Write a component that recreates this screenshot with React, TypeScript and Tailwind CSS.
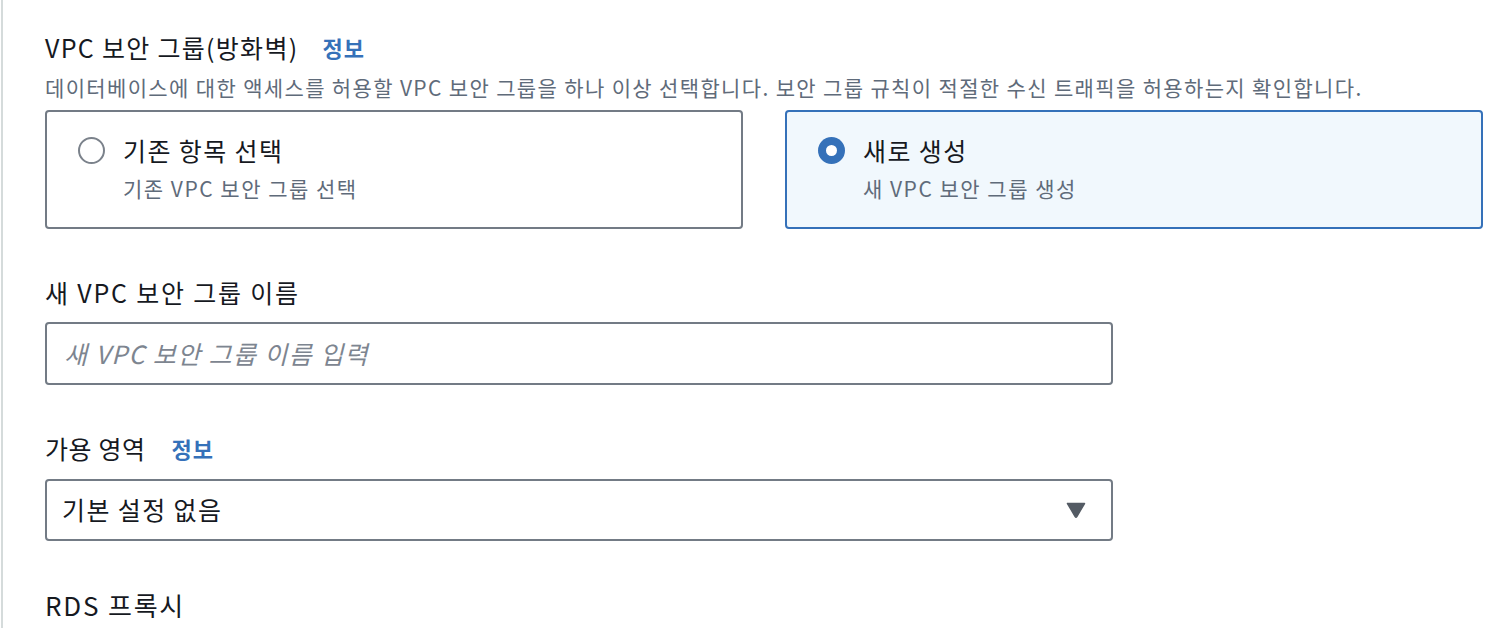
import React from "react";

const FONT = { fontFamily: '"Noto Sans CJK KR", "Noto Sans", sans-serif' };

function InfoLink({ gap }: { gap: string }) {
  return (
    <span className={`${gap} text-[22px] font-bold leading-[32px] tracking-[1px] text-[#3571b9]`}>정보</span>
  );
}

function RadioCard({
  title,
  subtitle,
  selected,
}: {
  title: string;
  subtitle: string;
  selected?: boolean;
}) {
  return (
    <div
      className={`flex h-[119px] flex-1 flex-col rounded-[4px] border-2 pl-[31px] pt-[22px] ${
        selected ? "border-[#3571b9] bg-[#f1f8fd]" : "border-[#737b85] bg-white"
      }`}
    >
      <div className="flex h-[32px] items-center">
        {selected ? (
          <span className="flex h-[27px] w-[27px] shrink-0 items-center justify-center rounded-full bg-[#3571b9]">
            <span className="h-[11px] w-[11px] rounded-full bg-white" />
          </span>
        ) : (
          <span className="h-[27px] w-[27px] shrink-0 rounded-full border-[2.5px] border-[#7b828b] bg-white" />
        )}
        <span className="ml-[18px] text-[25px] leading-[32px] tracking-[1.4px] text-[#16191f]">{title}</span>
      </div>
      <div className="mt-[8px] pl-[45px] text-[21px] leading-[28px] tracking-[1.5px] text-[#5f6b7a]">{subtitle}</div>
    </div>
  );
}

export default function App() {
  return (
    <div className="h-[628px] overflow-hidden bg-white pl-[1px]" style={FONT}>
      <div className="h-full border-l-2 border-[#d5dbdb] pl-[42px] pr-[29px] pt-[31px]">
        {/* Security group */}
        <div className="flex h-[32px] items-center">
          <span className="text-[25px] leading-[32px] tracking-[1.3px] text-[#16191f]">VPC 보안 그룹(방화벽)</span>
          <InfoLink gap="ml-[24px]" />
        </div>
        <p className="mt-[10px] whitespace-nowrap text-[21px] leading-[28px] tracking-[1.35px] text-[#5f6b7a]">
          데이터베이스에 대한 액세스를 허용할 VPC 보안 그룹을 하나 이상 선택합니다. 보안 그룹 규칙이 적절한 수신 트래픽을 허용하는지 확인합니다.
        </p>
        <div className="mt-[9px] flex gap-[42px]">
          <RadioCard title="기존 항목 선택" subtitle="기존 VPC 보안 그룹 선택" />
          <RadioCard title="새로 생성" subtitle="새 VPC 보안 그룹 생성" selected />
        </div>

        {/* New group name */}
        <div className="mt-[47px] text-[25px] leading-[32px] tracking-[1.8px] text-[#16191f]">새 VPC 보안 그룹 이름</div>
        <div className="mt-[14px] flex h-[63px] w-[1068px] items-center rounded-[4px] border-2 border-[#737b85] pl-[17px]">
          <span className="text-[25px] italic tracking-[1.4px] text-[#7d8590]">새 VPC 보안 그룹 이름 입력</span>
        </div>

        {/* Availability zone */}
        <div className="mt-[47px] flex h-[32px] items-center">
          <span className="text-[25px] leading-[32px] tracking-[0.6px] text-[#16191f]">가용 영역</span>
          <InfoLink gap="ml-[26px]" />
        </div>
        <div className="mt-[15px] flex h-[62px] w-[1068px] items-center justify-between rounded-[4px] border-2 border-[#737b85] pl-[15px] pr-[25px]">
          <span className="text-[25px] tracking-[1.4px] text-[#16191f]">기본 설정 없음</span>
          <svg width="20" height="16" viewBox="0 0 20 16">
            <path
              d="M1.5 1.5 H18.5 L10.8 14.6 Q10 15.8 9.2 14.6 Z"
              fill="#545b64"
              stroke="#545b64"
              strokeWidth="1.5"
              strokeLinejoin="round"
            />
          </svg>
        </div>

        {/* RDS proxy */}
        <div className="mt-[48px] text-[26px] leading-[32px] tracking-[1.8px] text-[#16191f]">RDS 프록시</div>
      </div>
    </div>
  );
}
